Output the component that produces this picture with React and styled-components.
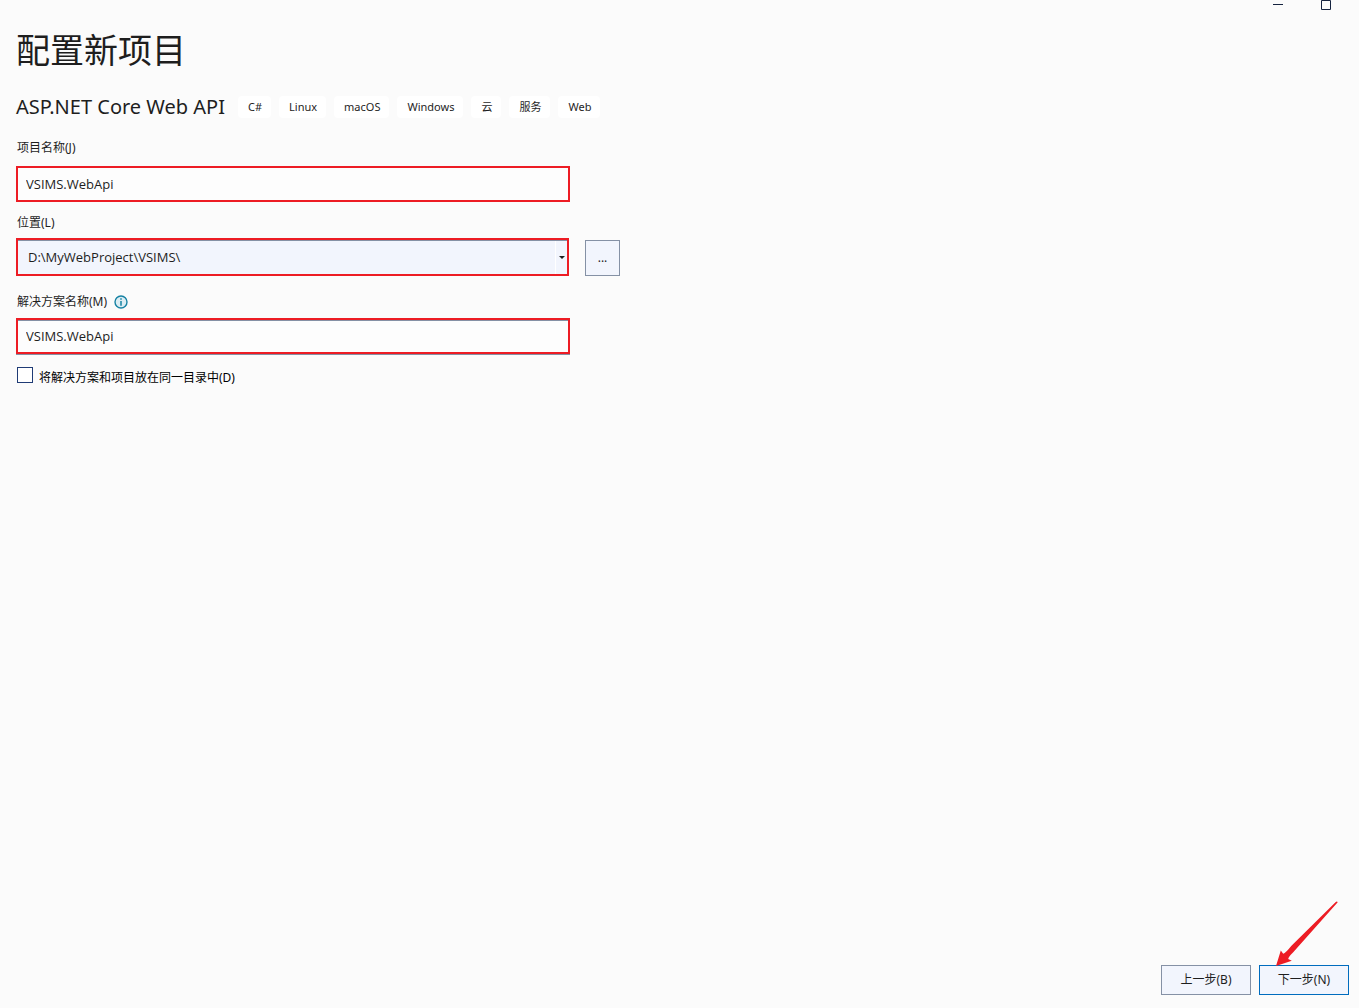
import React from "react";
import styled, { createGlobalStyle } from "styled-components";

const GlobalStyle = createGlobalStyle`
    * {
        box-sizing: border-box;
    }

    body {
        margin: 0;
        background: #fbfbfb;
        color: #1e1e1e;
        font-family: "Noto Sans", "Noto Sans CJK SC", sans-serif;
        font-size: 12px;
        line-height: 16px;
    }

    button, input, select {
        font: inherit;
        color: inherit;
    }
`;

const Window = styled.div`
    position: relative;
    min-height: 100vh;
    display: flex;
    flex-direction: column;
`;

const WindowControls = styled.div`
    position: absolute;
    top: 0;
    right: 28px;
    display: flex;
    gap: 38px;
`;

const ControlButton = styled.button`
    width: 10px;
    height: 10px;
    padding: 0;
    border: 0;
    background: none;

    svg {
        display: block;
    }
`;

const Content = styled.main`
    flex: 1;
    padding: 25px 16px 0;
`;

const Title = styled.h1`
    margin: 0;
    font-size: 34px;
    font-weight: 400;
    line-height: 50px;
`;

const Template = styled.div`
    display: flex;
    flex-wrap: wrap;
    align-items: center;
    gap: 13px;
    margin-top: 18px;
`;

const TemplateName = styled.h2`
    margin: 0;
    font-size: 20px;
    font-weight: 400;
    line-height: 28px;
`;

const Tags = styled.ul`
    display: flex;
    gap: 8px;
    margin: 0;
    padding: 0;
    list-style: none;
`;

const Tag = styled.li`
    padding: 3px 9px 3px 10px;
    border-radius: 4px;
    background: #fff;
    font-size: 11px;
`;

const Field = styled.div`
    margin-top: ${({ $gap }) => $gap}px;
`;

const Label = styled.label`
    display: inline-block;
`;

const LabelRow = styled.div`
    display: flex;
    align-items: center;
    gap: 7px;
    margin-bottom: ${({ $gap }) => $gap || 7}px;
    padding-left: 1px;
`;

const ControlRow = styled.div`
    display: flex;
    align-items: flex-end;
    gap: 16px;
`;

const TextBox = styled.input`
    display: block;
    flex: 0 1 554px;
    min-width: 0;
    height: 36px;
    padding: 0 8px;
    border: 2px solid #ed1c24;
    border-radius: 0;
    background: #fdfdfd;
    box-shadow: ${({ $edged }) => ($edged ? "inset 0 1px #8591a5, 0 1px #8591a5" : "none")};
    font-family: "Open Sans", "Noto Sans CJK SC", sans-serif;
    font-size: 13px;
    outline: none;
`;

const ComboBox = styled.div`
    position: relative;
    flex: 0 1 553px;
`;

const Select = styled.select`
    appearance: none;
    display: block;
    width: 100%;
    height: 38px;
    padding: 0 20px 0 10px;
    border: 2px solid #ed1c24;
    border-radius: 0;
    background: #f2f5fd;
    box-shadow: inset 0 1px #8591a5;
    font-family: "Open Sans", "Noto Sans CJK SC", sans-serif;
    font-size: 13px;
    outline: none;
`;

const DropMark = styled.span`
    position: absolute;
    top: 3px;
    right: 2px;
    bottom: 2px;
    width: 12px;
    display: flex;
    align-items: center;
    justify-content: center;
    border-left: 1px solid #fff;
    pointer-events: none;
`;

const Button = styled.button`
    width: ${({ $width }) => $width || 90}px;
    height: ${({ $height }) => $height || 30}px;
    padding: 0;
    border: 1px solid ${({ $primary }) => ($primary ? "#006cbe" : "#8591a5")};
    border-radius: 0;
    background: #f2f5fd;
`;

const CheckRow = styled.div`
    display: flex;
    align-items: flex-start;
    gap: 6px;
    margin-top: 13px;
    padding-left: 1px;
    color: #000;

    label {
        padding-top: 3px;
    }
`;

const Checkbox = styled.input`
    appearance: none;
    width: 16px;
    height: 16px;
    margin: 0;
    border: 1px solid #1f3b75;
    background: #fff;

    &:checked {
        background: #1f3b75;
    }
`;

const Footer = styled.footer`
    display: flex;
    justify-content: flex-end;
    gap: 8px;
    padding: 0 10px 13px;
`;

const NextStep = styled.div`
    position: relative;
`;

const Arrow = styled.svg`
    position: absolute;
    right: 11px;
    bottom: 29px;
    pointer-events: none;
`;

const tags = ["C#", "Linux", "macOS", "Windows", "云", "服务", "Web"];

function InfoIcon() {
    return (
        <svg width="14" height="14" viewBox="0 0 14 14" aria-hidden="true">
            <circle cx="7" cy="7" r="6" fill="#dcedf3" stroke="#1682a3" strokeWidth="1.4" />
            <path d="M7 3.2v1.6M7 6v4.8" stroke="#1682a3" strokeWidth="1.5" />
        </svg>
    );
}

function App() {
    return (
        <>
            <GlobalStyle />
            <Window>
                <WindowControls>
                    <ControlButton aria-label="最小化">
                        <svg width="10" height="10">
                            <path d="M0 4.5h10" stroke="#15233f" />
                        </svg>
                    </ControlButton>
                    <ControlButton aria-label="最大化">
                        <svg width="10" height="10">
                            <path d="M.5 .5h9v9h-9z" fill="none" stroke="#15233f" />
                        </svg>
                    </ControlButton>
                </WindowControls>

                <Content>
                    <Title>配置新项目</Title>
                    <Template>
                        <TemplateName>ASP.NET Core Web API</TemplateName>
                        <Tags>
                            {tags.map((tag) => (
                                <Tag key={tag}>{tag}</Tag>
                            ))}
                        </Tags>
                    </Template>

                    <Field $gap={19}>
                        <LabelRow $gap={10}>
                            <Label htmlFor="project">项目名称(J)</Label>
                        </LabelRow>
                        <ControlRow>
                            <TextBox id="project" defaultValue="VSIMS.WebApi" />
                        </ControlRow>
                    </Field>

                    <Field $gap={13}>
                        <LabelRow>
                            <Label htmlFor="location">位置(L)</Label>
                        </LabelRow>
                        <ControlRow>
                            <ComboBox>
                                <Select id="location">
                                    <option>D:\MyWebProject\VSIMS\</option>
                                </Select>
                                <DropMark>
                                    <svg width="6" height="3" aria-hidden="true">
                                        <path d="M0 0h6L3 3z" fill="#1e1e1e" />
                                    </svg>
                                </DropMark>
                            </ComboBox>
                            <Button $width={35} $height={36} aria-label="浏览">...</Button>
                        </ControlRow>
                    </Field>

                    <Field $gap={18}>
                        <LabelRow $gap={8}>
                            <Label htmlFor="solution">解决方案名称(M)</Label>
                            <InfoIcon />
                        </LabelRow>
                        <ControlRow>
                            <TextBox id="solution" $edged defaultValue="VSIMS.WebApi" />
                        </ControlRow>
                    </Field>

                    <CheckRow>
                        <Checkbox type="checkbox" id="same-folder" />
                        <Label htmlFor="same-folder">将解决方案和项目放在同一目录中(D)</Label>
                    </CheckRow>
                </Content>

                <Footer>
                    <Button>上一步(B)</Button>
                    <NextStep>
                        <Button $primary>下一步(N)</Button>
                        <Arrow width="62" height="65" viewBox="0 0 62 65" aria-hidden="true">
                            <path
                                d="M59.500 1.300q1.500-1.500 2.200 0L17 51.500q-4.500 4-4.800 6.500l3.600 1.800L0 65l4.800-15.500 2.400 3.300q2.500-.8 8-7.800z"
                                fill="#ed1c24"
                            />
                        </Arrow>
                    </NextStep>
                </Footer>
            </Window>
        </>
    );
}

export default App;
